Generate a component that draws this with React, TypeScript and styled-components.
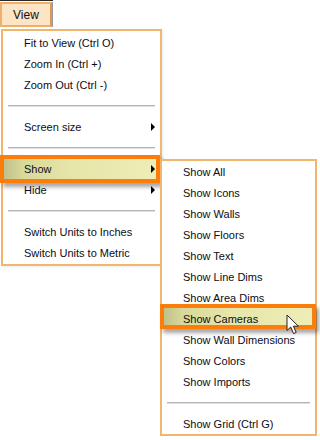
import React from 'react'
import styled, { createGlobalStyle } from 'styled-components'

const GlobalStyle = createGlobalStyle`
    body {
        margin: 0;
        background: #ffffff;
        font-family: "Liberation Sans", Arial, sans-serif;
    }
`

const mainItems = [
    { label: 'Fit to View (Ctrl O)' },
    { label: 'Zoom In (Ctrl +)' },
    { label: 'Zoom Out (Ctrl -)' },
    { sep: true },
    { label: 'Screen size', arrow: true },
    { sep: true },
    { label: 'Show', arrow: true, active: true },
    { label: 'Hide', arrow: true },
    { sep: true },
    { label: 'Switch Units to Inches' },
    { label: 'Switch Units to Metric' },
]

const showItems = [
    { label: 'Show All' },
    { label: 'Show Icons' },
    { label: 'Show Walls' },
    { label: 'Show Floors' },
    { label: 'Show Text' },
    { label: 'Show Line Dims' },
    { label: 'Show Area Dims' },
    { label: 'Show Cameras', active: true },
    { label: 'Show Wall Dimensions' },
    { label: 'Show Colors' },
    { label: 'Show Imports' },
    { sep: true },
    { label: 'Show Grid (Ctrl G)' },
]

export default function App() {
    return (
        <>
            <GlobalStyle />
            <Page>
                <MenuBar>
                    <ViewButton>View</ViewButton>
                </MenuBar>
                <MainMenu>
                    {mainItems.map((item, i) =>
                        item.sep ? (
                            <SepRow key={i}><Line /></SepRow>
                        ) : (
                            <Item key={i}>
                                {item.active && <Highlight $left={-3} $right={0} $top={-3} $bottom={-4} />}
                                <Label>{item.label}</Label>
                                {item.arrow && <Arrow />}
                                {item.active && (
                                    <SubMenu>
                                        {showItems.map((sub, j) =>
                                            sub.sep ? (
                                                <SepRow key={j}><Line /></SepRow>
                                            ) : (
                                                <Item key={j}>
                                                    {sub.active && <Highlight $left={-2} $right={-1} $top={-4} $bottom={0} />}
                                                    <Label>{sub.label}</Label>
                                                    {sub.active && (
                                                        <Cursor width="14" height="21" viewBox="0 0 14 21">
                                                            <path
                                                                d="M1 1 L1 16.5 L4.7 13 L7.6 19.6 L10.2 18.5 L7.4 12.2 L12.4 12.2 Z"
                                                                fill="#ffffff"
                                                                stroke="#222"
                                                                strokeWidth="1"
                                                                strokeLinejoin="round"
                                                            />
                                                        </Cursor>
                                                    )}
                                                </Item>
                                            )
                                        )}
                                    </SubMenu>
                                )}
                            </Item>
                        )
                    )}
                </MainMenu>
            </Page>
        </>
    )
}

const Page = styled.div`
    position: relative;
    width: 320px;
    height: 440px;
    overflow: hidden;
`

const MenuBar = styled.div`
    display: flex;
    padding-top: 1px;
    width: 53px;
    border-top: 1px solid #2a2a2a;
`

const ViewButton = styled.div`
    display: flex;
    align-items: center;
    box-sizing: border-box;
    width: 52px;
    height: 25px;
    padding-left: 11px;
    border: 2px solid #eeb06a;
    border-right-color: #d99a55;
    box-shadow: 1px 0 0 #9a9a9a;
    background: #fde4c4;
    font-size: 12px;
    color: #111118;
`

const MainMenu = styled.div`
    position: relative;
    display: flex;
    flex-direction: column;
    box-sizing: border-box;
    width: 161px;
    margin-top: 2px;
    margin-left: 1px;
    padding: 1px 0;
    border: 2px solid #efb66c;
    background: #ffffff;
    box-shadow: 1px 1px 2px rgba(0, 0, 0, 0.08);
`

const Item = styled.div`
    position: relative;
    display: flex;
    align-items: center;
    height: 21px;
    padding-left: 21px;
    padding-right: 5px;
`

const Label = styled.span`
    position: relative;
    flex: 1;
    font-size: 11px;
    color: #0c0c14;
    white-space: nowrap;
`

const Arrow = styled.span`
    position: relative;
    width: 0;
    height: 0;
    border-top: 4px solid transparent;
    border-bottom: 4px solid transparent;
    border-left: 4.5px solid #000000;
`

const SepRow = styled.div`
    display: flex;
    align-items: center;
    height: 21px;
    padding: 0 5px;
`

const Line = styled.div`
    flex: 1;
    height: 1px;
    background: #b5b5b5;
    box-shadow: 0 1px 0 #e0e0e0;
`

const Highlight = styled.div<{ $left: number; $right: number; $top: number; $bottom: number }>`
    position: absolute;
    left: ${p => p.$left}px;
    right: ${p => p.$right}px;
    top: ${p => p.$top}px;
    bottom: ${p => p.$bottom}px;
    border: 4px solid #fb7d0c;
    background: linear-gradient(to right, #c0c08a 0%, #d8d89a 12%, #e6e6aa 45%, #ededb6 100%);
    box-shadow: 3px 4px 4px rgba(0, 0, 0, 0.35);
`

const SubMenu = styled.div`
    position: absolute;
    top: 1px;
    left: 157px;
    z-index: 2;
    display: flex;
    flex-direction: column;
    box-sizing: border-box;
    width: 157px;
    border: 2px solid #efb66c;
    background: #ffffff;
`

const Cursor = styled.svg`
    position: absolute;
    left: 124px;
    top: 6px;
`
